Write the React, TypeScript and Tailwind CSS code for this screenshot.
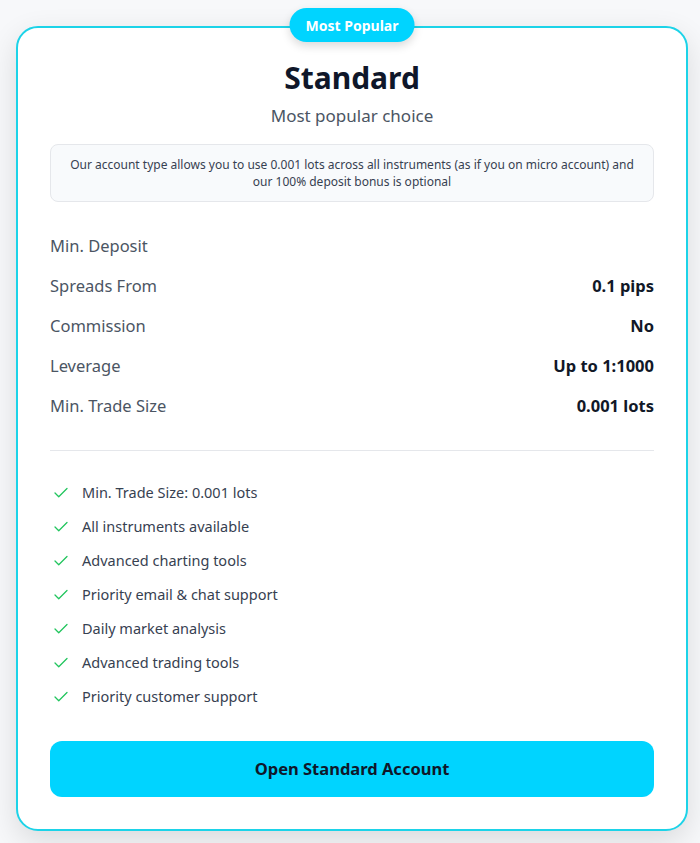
import { Check } from 'lucide-react';

const specs = [
  { label: 'Min. Deposit', value: '' },
  { label: 'Spreads From', value: '0.1 pips' },
  { label: 'Commission', value: 'No' },
  { label: 'Leverage', value: 'Up to 1:1000' },
  { label: 'Min. Trade Size', value: '0.001 lots' },
];

const features = [
  'Min. Trade Size: 0.001 lots',
  'All instruments available',
  'Advanced charting tools',
  'Priority email & chat support',
  'Daily market analysis',
  'Advanced trading tools',
  'Priority customer support',
];

const App = () => {
  return (
    <div
      className="min-h-[843px] bg-[#f7f8fa] pl-4 pt-[26px] pb-3"
      style={{ fontFamily: '"Noto Sans", "Open Sans", sans-serif' }}
    >
      <div className="relative w-[672px] bg-white border-2 border-[#1cd3e8] rounded-[22px] shadow-[0_10px_30px_rgba(0,0,0,0.12)] px-8 pt-[30px] pb-8">
        <div className="absolute left-1/2 -translate-x-1/2 -top-[20px] h-[34px] px-4 flex items-center rounded-full bg-[#00d4ff] text-white text-[14px] font-bold shadow-[0_4px_10px_rgba(0,0,0,0.15)]">
          Most Popular
        </div>

        <div className="text-center">
          <h2 className="text-[30px] leading-[40px] font-bold text-[#0f172a]">Standard</h2>
          <p className="mt-[6px] text-[17px] leading-6 text-[#4b5563]">Most popular choice</p>
        </div>

        <div className="mt-4 bg-[#f8fafc] border border-[#e5e7eb] rounded-lg px-3 py-[11px] text-center text-[12px] leading-[17px] text-[#374151]">
          Our account type allows you to use 0.001 lots across all instruments (as if you on micro account) and our 100% deposit bonus is optional
        </div>

        <div className="mt-[32px] flex flex-col gap-4">
          {specs.map((s) => (
            <div key={s.label} className="flex justify-between items-center h-6 text-[16.5px]">
              <span className="text-[#4b5563]">{s.label}</span>
              <span className="font-bold text-[#111827]">{s.value}</span>
            </div>
          ))}
        </div>

        <div className="mt-[32px] border-t border-[#e5e7eb]" />

        <ul className="mt-[30px] flex flex-col gap-[10px]">
          {features.map((f) => (
            <li key={f} className="flex items-center h-6 text-[14.5px] text-[#374151]">
              <Check className="w-[18px] h-[18px] text-[#22c55e] ml-[2px] mr-[12px]" strokeWidth={1.75} />
              {f}
            </li>
          ))}
        </ul>

        <button className="mt-[32px] w-full h-[56px] rounded-xl bg-[#00d4ff] text-[16.5px] font-bold text-[#0f172a]">
          Open Standard Account
        </button>
      </div>
    </div>
  );
};

export default App;
